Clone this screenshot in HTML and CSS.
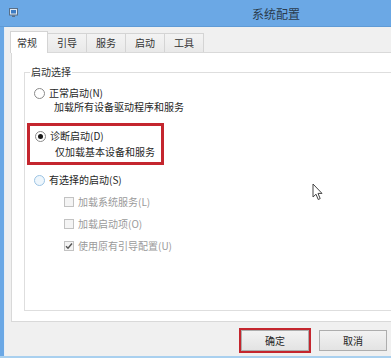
FILE: index.html
```html
<!DOCTYPE html>
<html lang="zh-CN">
<head>
    <meta charset="UTF-8">
    <meta name="viewport" content="width=device-width, initial-scale=1.0">
    <title>系统配置</title>
    <link rel="stylesheet" href="styles.css">
</head>
<body>
    <div class="window">
        <div class="titlebar">
            <svg class="app-icon" width="9" height="10" viewBox="0 0 9 10">
                <rect x="0.5" y="0.5" width="8" height="6.5" fill="#dfe9f3" stroke="#5a6f86"/>
                <rect x="2" y="2" width="5" height="3.5" fill="#3d7cc4"/>
                <rect x="3" y="7.5" width="3" height="1.5" fill="#5a6f86"/>
            </svg>
            <span class="title">系统配置</span>
        </div>

        <div class="frame">
            <div class="edge"></div>
            <div class="client">
                <div class="tabs">
                    <div class="tab active">常规</div>
                    <div class="tab">引导</div>
                    <div class="tab">服务</div>
                    <div class="tab">启动</div>
                    <div class="tab">工具</div>
                </div>

                <div class="panel">
                    <fieldset class="group">
                        <legend>启动选择</legend>

                        <div class="option first">
                            <span class="radio"></span>
                            <span>正常启动(N)</span>
                        </div>
                        <div class="desc">加载所有设备驱动程序和服务</div>

                        <div class="highlight">
                            <div class="option">
                                <span class="radio checked"></span>
                                <span>诊断启动(D)</span>
                            </div>
                            <div class="desc">仅加载基本设备和服务</div>
                        </div>

                        <div class="option selective">
                            <span class="radio hover"></span>
                            <span>有选择的启动(S)</span>
                        </div>

                        <div class="check">
                            <span class="box"></span>
                            <span>加载系统服务(L)</span>
                        </div>
                        <div class="check">
                            <span class="box"></span>
                            <span>加载启动项(O)</span>
                        </div>
                        <div class="check">
                            <span class="box">
                                <svg width="8" height="8" viewBox="0 0 8 8">
                                    <path d="M1 4.2 L3 6.2 L7 1.5" fill="none" stroke="#555" stroke-width="1.4"/>
                                </svg>
                            </span>
                            <span>使用原有引导配置(U)</span>
                        </div>
                    </fieldset>
                </div>

                <div class="actions">
                    <div class="btn-mark">
                        <button class="btn">确定</button>
                    </div>
                    <button class="btn">取消</button>
                </div>
            </div>
        </div>

        <div class="bottom-edge"></div>

        <svg class="cursor" width="12" height="18" viewBox="0 0 12 18">
            <path d="M1 1 L1 14 L4 11.2 L6.2 16.5 L8.2 15.6 L6 10.4 L10 10.4 Z" fill="#fff" stroke="#444" stroke-width="1"/>
        </svg>
    </div>
</body>
</html>
```

FILE: styles.css
```css
* {
    box-sizing: border-box;
}

body {
    margin: 0;
    width: 391px;
    height: 358px;
    overflow: hidden;
    background: #f0f0f0;
    font-family: "Noto Sans CJK SC", "Noto Sans", sans-serif;
    font-size: 10px;
    color: #1f1f1f;
}

.window {
    position: relative;
    width: 391px;
    height: 358px;
    display: flex;
    flex-direction: column;
    overflow: hidden;
}

/* title bar */
.titlebar {
    height: 27px;
    flex-shrink: 0;
    background: #6ba8e5;
    border-bottom: 1px solid #5f9bd6;
    display: flex;
    align-items: center;
}

.app-icon {
    margin-left: 9px;
}

.title {
    margin-left: 234px;
    font-size: 12px;
    color: #2a3b4d;
}

.frame {
    flex: 1;
    display: flex;
    min-height: 0;
}

.edge {
    width: 5px;
    background: #6ba8e5;
    border-right: 1px solid #e6eef6;
}

.client {
    flex: 1;
    min-width: 0;
    padding-left: 5px;
    background: #f0f0f0;
}

/* tabs */
.tabs {
    display: flex;
    align-items: flex-end;
    height: 25px;
    padding-top: 4px;
}

.tab {
    height: 19px;
    line-height: 18px;
    padding: 0 9px;
    background: linear-gradient(#f3f3f3, #e9e9e9);
    border: 1px solid #d4d4d4;
    border-bottom: none;
    border-left: none;
    color: #333;
}

.tab.active {
    position: relative;
    z-index: 1;
    height: 22px;
    line-height: 21px;
    margin-bottom: -1px;
    padding: 0 10px 0 6px;
    background: #fff;
    border-left: 1px solid #d4d4d4;
    margin-left: 0;
}

/* page */
.panel {
    width: 520px;
    height: 270px;
    margin-left: 1px;
    padding: 12px 0 0 12px;
    background: #fff;
    border: 1px solid #d9d9d9;
}

.group {
    height: 246px;
    margin: 0;
    padding: 0;
    border: 1px solid #dedede;
}

.group legend {
    margin-left: 5px;
    padding: 0 1px;
    line-height: 14px;
    color: #333;
}

.option {
    display: flex;
    align-items: center;
    gap: 4px;
    margin-left: 9px;
    line-height: 14px;
}

.option.first {
    margin-top: 7px;
}

.desc {
    margin-left: 29px;
    line-height: 14px;
}

.radio {
    width: 11px;
    height: 11px;
    border: 1px solid #8a8a8a;
    border-radius: 50%;
    background: #fff;
    display: flex;
    align-items: center;
    justify-content: center;
}

.radio.checked::after {
    content: "";
    width: 5px;
    height: 5px;
    border-radius: 50%;
    background: #1a1a1a;
}

.radio.hover {
    border-color: #9cc4e4;
    background: #eef6fc;
}

.highlight {
    width: fit-content;
    margin: 9px 0 0 2px;
    padding: 3px 6px 3px 2px;
    border: 3px solid #c4262e;
}

.highlight .option {
    margin-left: 3px;
}

.highlight .desc {
    margin-left: 23px;
    margin-top: 2px;
}

.option.selective {
    margin-top: 8px;
}

.check {
    display: flex;
    align-items: center;
    gap: 4px;
    margin: 8px 0 0 39px;
    line-height: 14px;
    color: #9a9a9a;
}

.box {
    width: 10px;
    height: 10px;
    border: 1px solid #c2c2c2;
    background: #f4f4f4;
    display: flex;
    align-items: center;
    justify-content: center;
}

/* buttons */
.actions {
    display: flex;
    align-items: center;
    gap: 8px;
    margin-top: 6px;
    padding-left: 229px;
}

.btn-mark {
    border: 2px solid #c4262e;
}

.btn {
    width: 68px;
    height: 21px;
    padding: 0;
    border: 1px solid #adadad;
    background: linear-gradient(#f2f2f2, #e3e3e3);
    font-family: inherit;
    font-size: 10px;
    color: #1f1f1f;
    display: block;
}

.bottom-edge {
    height: 2px;
    flex-shrink: 0;
    background: #a9d0ef;
}

.cursor {
    position: absolute;
    left: 312px;
    top: 183px;
}
```
